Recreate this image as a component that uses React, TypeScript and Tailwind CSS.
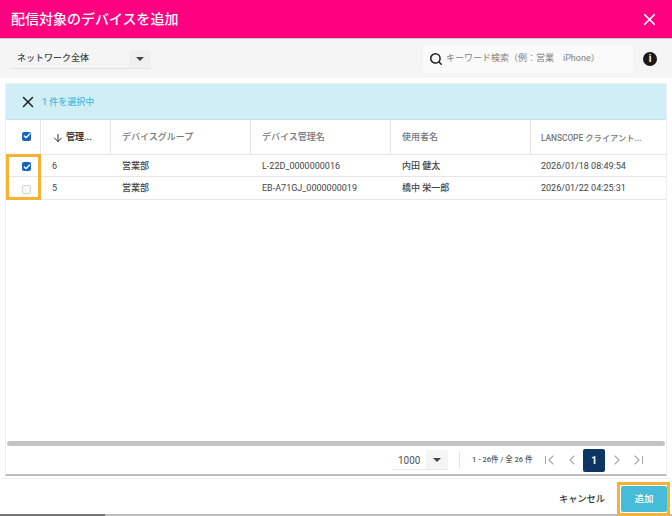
import { ArrowDown, ChevronLeft, ChevronRight, Check, Search, X } from 'lucide-react';

const font = { fontFamily: 'Roboto, "Noto Sans CJK JP", sans-serif' };

const rows = [
  { id: '6', group: '営業部', device: 'L-22D_0000000016', user: '内田 健太', date: '2026/01/18 08:49:54', checked: true, h: 'h-[22px]' },
  { id: '5', group: '営業部', device: 'EB-A71GJ_0000000019', user: '橋中 栄一郎', date: '2026/01/22 04:25:31', checked: false, h: 'h-[23px]' },
];

function Box({ checked }: { checked: boolean }) {
  if (!checked) return <div className="w-[9px] h-[9px] rounded-[2px] border border-[#d4d4d4] bg-[#f7f7f7]" />;
  return (
    <div className="w-[9px] h-[9px] rounded-[2px] bg-[#1565c0] flex items-center justify-center">
      <Check size={8} strokeWidth={4} className="text-white" />
    </div>
  );
}

function Caret() {
  return <div className="w-0 h-0 border-l-[4px] border-r-[4px] border-t-[4px] border-l-transparent border-r-transparent border-t-[#444]" />;
}

export default function App() {
  return (
    <div style={font} className="relative w-[672px] h-[516px] overflow-hidden bg-white text-[#333] flex flex-col">
      <div className="h-[39px] shrink-0 bg-[#ff0080] border-b border-[#c9c9c9] flex items-center justify-between pl-[11px] pr-[13px]">
        <h1 className="text-[14px] text-white font-medium">配信対象のデバイスを追加</h1>
        <X size={19} strokeWidth={2.2} className="text-white" />
      </div>

      <div className="h-[39px] shrink-0 bg-[#f5f5f5] flex items-center pl-[11px] pr-[15px]">
        <div className="w-[140px] h-[19px] mt-[1px] flex items-center justify-between border-b border-[#e2e2e2]">
          <span className="pl-[6px] text-[9px] font-medium text-[#444]">ネットワーク全体</span>
          <div className="w-[22px] h-full bg-[#f0f0f0] flex items-center justify-center"><Caret /></div>
        </div>
        <div className="ml-auto w-[210px] h-[28px] bg-[#fafafa] rounded-[3px] flex items-center pl-[6px] gap-[3px]">
          <Search size={14} strokeWidth={2.6} className="text-[#222]" />
          <span className="pt-px text-[9px] text-[#808080] whitespace-pre">キーワード検索（例：営業　iPhone）</span>
        </div>
        <div className="ml-[10px] w-[14px] h-[14px] rounded-full bg-[#1a1a1a] flex items-center justify-center text-white text-[10px] font-bold leading-none">i</div>
      </div>

      <div className="mx-[5px] mt-[5px] h-[393px] shrink-0 border border-[#eeeeee] border-b-2 border-b-[#bdbdbd] flex flex-col bg-white">
        <div className="h-[36px] shrink-0 bg-[#cfeef6] border-b border-[#c4e2ea] flex items-center pl-[13px] gap-[5px] pt-px">
          <X size={18} strokeWidth={2} className="text-[#222]" />
          <span className="pt-px text-[9px] font-medium text-[#45bcd8]">1 件を選択中</span>
        </div>

        <div className="h-[35px] shrink-0 flex border-b border-[#e6e6e6] text-[9px] font-medium text-[#777]">
          <div className="w-[35px] border-r border-[#e6e6e6] flex items-center pl-[16px] pb-[2px]"><Box checked /></div>
          <div className="w-[70px] border-r border-[#e6e6e6] flex items-center pl-[11px] pt-[2px] gap-[2px] text-[#333] font-bold">
            <ArrowDown size={12} strokeWidth={2} />
            <span>管理...</span>
          </div>
          <div className="w-[140px] border-r border-[#e6e6e6] flex items-center pl-[11px] pt-[2px]">デバイスグループ</div>
          <div className="w-[140px] border-r border-[#e6e6e6] flex items-center pl-[11px] pt-[2px]">デバイス管理名</div>
          <div className="w-[140px] border-r border-[#e6e6e6] flex items-center pl-[11px] pt-[2px]">使用者名</div>
          <div className="flex-1 flex items-center pl-[10px] pt-[2px] text-[8.3px] whitespace-nowrap">LANSCOPE クライアント...</div>
        </div>

        {rows.map((r) => (
          <div key={r.id} className={`${r.h} shrink-0 flex items-center border-b border-[#e6e6e6] pt-[2px] text-[9px] text-[#444]`}>
            <div className="w-[35px] flex items-center pl-[16px]"><Box checked={r.checked} /></div>
            <div className="w-[70px] pl-[11px]">{r.id}</div>
            <div className="w-[140px] pl-[11px] font-medium">{r.group}</div>
            <div className="w-[140px] pl-[11px]">{r.device}</div>
            <div className="w-[140px] pl-[11px] font-medium">{r.user}</div>
            <div className="flex-1 pl-[10px] whitespace-nowrap">{r.date}</div>
          </div>
        ))}

        <div className="flex-1" />
        <div className="h-[5px] shrink-0 mx-px rounded-full bg-[#c4c4c4]" />

        <div className="h-[28px] shrink-0 flex items-center justify-end pr-[23px] text-[#555]">
          <div className="w-[56px] h-[20px] flex items-center justify-between border-b border-[#e8e8e8]">
            <span className="pl-[6px] pt-px text-[10px]">1000</span>
            <div className="w-[22px] h-full bg-[#f5f5f5] flex items-center justify-center"><Caret /></div>
          </div>
          <div className="ml-[11px] h-[18px] border-l border-[#e6e6e6] pl-[12px] w-[73px] text-[7.5px] font-medium flex items-center whitespace-nowrap">1 - 26件 / 全 26 件</div>
          <div className="ml-[13px] flex items-center text-[#a8a8a8]">
            <div className="w-px h-[8px] bg-[#a8a8a8]" />
            <ChevronLeft size={16} strokeWidth={1.6} className="ml-[-3px]" />
            <ChevronLeft size={16} strokeWidth={1.6} className="ml-[5px]" />
            <div className="ml-[3px] w-[22px] h-[23px] rounded-[2px] bg-[#0d3563] text-white text-[10px] font-bold flex items-center justify-center">1</div>
            <ChevronRight size={16} strokeWidth={1.6} className="ml-[4px]" />
            <ChevronRight size={16} strokeWidth={1.6} className="ml-[4px]" />
            <div className="w-px h-[8px] bg-[#a8a8a8] ml-[-3px]" />
          </div>
        </div>
      </div>

      <div className="flex-1 flex items-center justify-end border-t border-[#f0f0f0] mt-[2px] pr-[5px] pt-[5px]">
        <span className="text-[9.2px] font-medium text-[#333] mr-[16px]">キャンセル</span>
        <div className="w-[46px] h-[26px] rounded-[2px] bg-[#45bcd8] text-white text-[9.5px] font-medium flex items-center justify-center">追加</div>
      </div>
      <div className="h-[2px] shrink-0 flex">
        <div className="w-[105px] bg-[#777777]" />
        <div className="flex-1 bg-[#bdbdbd]" />
      </div>

      <div className="absolute left-[6px] top-[154px] w-[35px] h-[46px] border-[3px] border-[#f7b233]" />
      <div className="absolute left-[617px] top-[482px] w-[53px] h-[34px] border-[3px] border-[#f7b233]" />
    </div>
  );
}
